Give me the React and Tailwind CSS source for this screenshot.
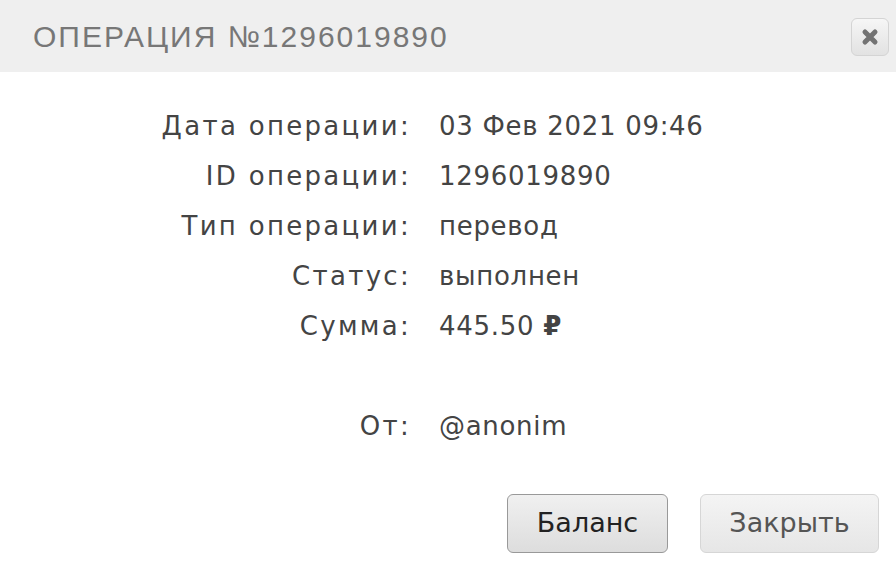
import React from 'react';

const rows = [
    { label: 'Дата операции:', value: '03 Фев 2021 09:46' },
    { label: 'ID операции:', value: '1296019890' },
    { label: 'Тип операции:', value: 'перевод' },
    { label: 'Статус:', value: 'выполнен' },
    { label: 'Сумма:', value: <>445.50 <span className="font-bold">₽</span></> },
];

const Row = ({ label, value }) => (
    <div className="flex h-[50px] items-center">
        <div className="w-[411px] text-right tracking-[2.3px] text-[#444]">{label}</div>
        <div className="ml-[28px] tracking-[0.7px] text-[#444]">{value}</div>
    </div>
);

export default function App() {
    return (
        <div className="w-[896px] h-[572px] bg-white overflow-hidden" style={{ fontFamily: '"DejaVu Sans", sans-serif' }}>
            <div className="h-[72px] bg-[#efefef] flex items-center justify-between pl-[33px] pr-[7px]">
                <h1 className="text-[30px] tracking-[2px] text-[#777] font-normal" style={{ fontFamily: '"Liberation Sans", sans-serif' }}>ОПЕРАЦИЯ №1296019890</h1>
                <button className="w-[38px] h-[38px] mt-[2px] rounded-[6px] border border-[#d4d4d4] bg-gradient-to-b from-[#f6f6f6] to-[#e2e2e2] flex items-center justify-center">
                    <svg width="20" height="20" viewBox="0 0 20 20">
                        <path d="M5 5 L15 15 M15 5 L5 15" stroke="#737373" strokeWidth="5" strokeLinecap="round" />
                    </svg>
                </button>
            </div>
            <div className="pt-[29px] text-[26px]">
                {rows.map(r => <Row key={r.label} {...r} />)}
                <div className="h-[50px]" />
                <Row label="От:" value="@anonim" />
            </div>
            <div className="flex justify-end gap-[32px] pr-[17px] mt-[43px]">
                <button className="w-[161px] h-[59px] rounded-[6px] border border-[#999] bg-gradient-to-b from-[#f0f0f0] to-[#dddddd] text-[27px] text-[#222]">Баланс</button>
                <button className="w-[179px] h-[59px] rounded-[6px] border border-[#d6d6d6] bg-gradient-to-b from-[#f4f4f4] to-[#e6e6e6] text-[27px] text-[#555]">Закрыть</button>
            </div>
        </div>
    );
}
